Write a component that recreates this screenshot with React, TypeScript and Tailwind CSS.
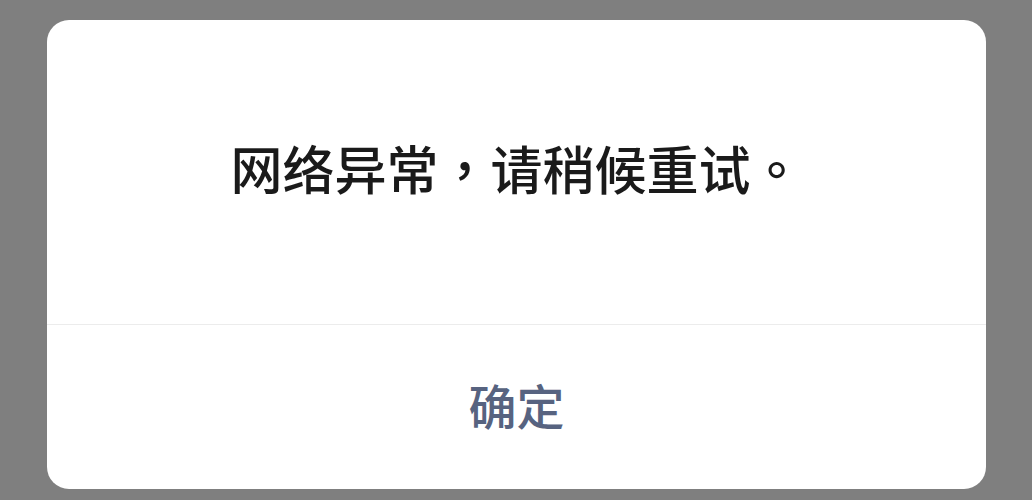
// punctuation sits centred in its cell, as in the traditional-Chinese face
const Punct = ({ children }: { children: string }) => (
  <span style={{ fontFamily: '"Noto Sans CJK TC", sans-serif' }}>{children}</span>
);

export default function App() {
  return (
    <div className="w-[1032px] h-[500px] bg-[#7f7f7f] pt-[20px] pl-[47px]">
      <div
        className="w-[939px] h-[469px] bg-white rounded-[22px] flex flex-col overflow-hidden"
        style={{ fontFamily: '"Noto Sans CJK SC", "Noto Sans", sans-serif' }}
      >
        {/* message */}
        <div className="h-[304px] flex items-center justify-center">
          <p className="text-[52px] leading-none font-medium text-[#1a1a1a] pb-[8px]">
            网络异常<Punct>，</Punct>请稍候重试<Punct>。</Punct>
          </p>
        </div>
        <div className="h-px bg-[#ececec]" />
        {/* action */}
        <button className="flex-1 flex items-center justify-center text-[48px] leading-none font-medium text-[#576380] pb-[6px]">
          确定
        </button>
      </div>
    </div>
  );
}
